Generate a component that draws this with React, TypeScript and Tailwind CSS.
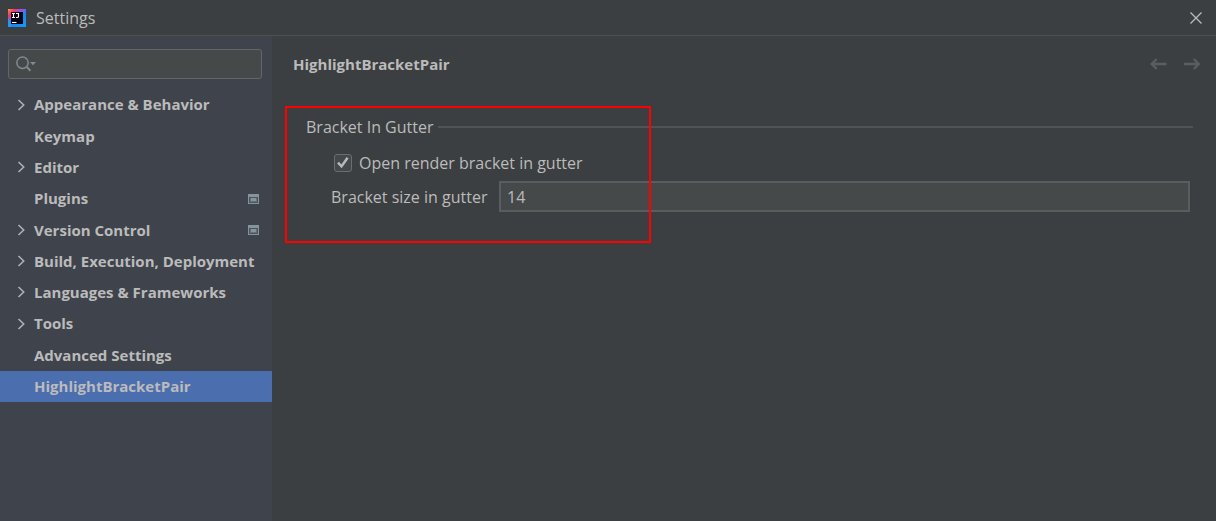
type NavItem = { label: string; expandable?: boolean; project?: boolean; selected?: boolean };

const items: NavItem[] = [
  { label: "Appearance & Behavior", expandable: true },
  { label: "Keymap" },
  { label: "Editor", expandable: true },
  { label: "Plugins", project: true },
  { label: "Version Control", expandable: true, project: true },
  { label: "Build, Execution, Deployment", expandable: true },
  { label: "Languages & Frameworks", expandable: true },
  { label: "Tools", expandable: true },
  { label: "Advanced Settings" },
  { label: "HighlightBracketPair", selected: true },
];

function Logo() {
  return (
    <svg width="18" height="18" viewBox="0 0 18 18" aria-hidden="true">
      <defs>
        <linearGradient id="logo-base" x1="0" y1="0" x2="1" y2="1">
          <stop offset="0" stopColor="#fb9a3d" />
          <stop offset="0.2" stopColor="#f0386b" />
          <stop offset="0.42" stopColor="#8a5be0" />
          <stop offset="0.6" stopColor="#1688f5" />
          <stop offset="1" stopColor="#149bff" />
        </linearGradient>
      </defs>
      <path d="M0 0H18V18H0Z" fill="url(#logo-base)" />
      <path d="M0 9L3 12V18H0Z" fill="#2497f2" />
      <rect x="3" y="3" width="12" height="12" fill="#090410" />
      <path d="M4 4.5H7M5.5 4.5V8.5M4 8.5H7M8 4.5H10.5V7.5Q10.5 8.5 9.2 8.5H8" fill="none" stroke="#fff" strokeWidth="1.1" />
      <path d="M4 13.5H8.5" stroke="#fff" strokeWidth="1.1" />
    </svg>
  );
}

function Chevron() {
  return (
    <svg width="8" height="12" viewBox="0 0 8 12" fill="none" stroke="#afb1b3" strokeWidth="1.6" aria-hidden="true">
      <path d="M1.5 1L6.7 6L1.5 11" />
    </svg>
  );
}

function ProjectIcon() {
  return (
    <svg width="11" height="10" viewBox="0 0 11 10" className="shrink-0" aria-hidden="true">
      <path d="M0 0H11V10H0Z" fill="#87939a" />
      <rect x="1" y="3" width="9" height="6" fill="#4b545c" />
      <rect x="2" y="4" width="7" height="4" fill="#66717a" />
      <rect x="3" y="4" width="5" height="3" fill="#87939a" />
    </svg>
  );
}

function Arrow({ forward }: { forward?: boolean }) {
  return (
    <svg width="18" height="12" viewBox="0 0 18 12" fill="none" stroke="#5b5e60" strokeWidth="2.3" aria-hidden="true">
      <path d={forward ? "M1 6H16M10.8 1L15.8 6L10.8 11" : "M17.5 6H2.5M7.7 1L2.7 6L7.7 11"} />
    </svg>
  );
}

export default function App() {
  return (
    <div className="flex min-h-screen flex-col bg-[#3c3f41] font-['Open_Sans','Noto_Sans',sans-serif] text-base text-[#bbbbbb]">
      <header className="flex h-9 items-center border-b border-[#4d5052] pr-3.5 pl-2">
        <Logo />
        <h1 className="ml-2.5 flex-1">Settings</h1>
        <button type="button" aria-label="Close">
          <svg width="12" height="12" viewBox="0 0 12 12" stroke="#bbbbbb" strokeWidth="1.3" aria-hidden="true">
            <path d="M0.5 0.5L11.5 11.5M11.5 0.5L0.5 11.5" />
          </svg>
        </button>
      </header>
      <div className="flex flex-1">
        <aside className="w-[272px] shrink-0 bg-[#3f434c] pt-[13px]">
          <div className="mr-2.5 ml-2 flex h-[30px] items-center rounded-[3px] border border-[#646668] bg-[#45494a] pl-1.5">
            <svg width="22" height="16" viewBox="0 0 22 16" fill="none" className="shrink-0" aria-hidden="true">
              <circle cx="7.5" cy="6.7" r="5.7" stroke="#7f8b91" strokeWidth="1.5" />
              <path d="M11.5 10.7L15.5 14.8" stroke="#7f8b91" strokeWidth="2" />
              <path d="M15 6H21L18 9.3Z" fill="#7f8b91" />
            </svg>
            <input type="text" aria-label="Search settings" className="min-w-0 flex-1 bg-transparent px-1 outline-none" />
          </div>
          <nav aria-label="Settings categories" className="mt-2.5">
            <ul className="grid h-[313px] auto-rows-fr">
              {items.map((item) => (
                <li key={item.label} className={item.selected ? "flex bg-[#4b6eaf]" : "flex"}>
                  <a href="#" aria-current={item.selected ? "page" : undefined} className="flex flex-1 items-center pr-[13px] pl-[17px] text-[15px] font-bold whitespace-nowrap">
                    <span className="w-[17px] shrink-0">{item.expandable && <Chevron />}</span>
                    <span className="flex-1">{item.label}</span>
                    {item.project && <ProjectIcon />}
                  </a>
                </li>
              ))}
            </ul>
          </nav>
        </aside>
        <main className="min-w-0 flex-1 pr-[23px] pl-[21px]">
          <div className="-mr-2 flex h-14 items-center">
            <h2 className="flex-1 text-[15px] font-bold">HighlightBracketPair</h2>
            <div className="flex gap-4">
              <button type="button" aria-label="Back"><Arrow /></button>
              <button type="button" aria-label="Forward"><Arrow forward /></button>
            </div>
          </div>
          <section className="relative pt-[23px] pl-[13px]">
            <div className="pointer-events-none absolute top-3.5 -left-2 h-[137px] w-[366px] border-2 border-[#ff0000]" />
            <div className="flex h-6 items-center gap-1">
              <h3>Bracket In Gutter</h3>
              <div className="h-0.5 flex-1 bg-[#515456]" />
            </div>
            <label className="mt-3 ml-7 flex h-6 w-fit items-center gap-[7px]">
              <span className="grid size-[18px]">
                <input type="checkbox" defaultChecked className="peer col-start-1 row-start-1 size-[18px] appearance-none rounded-[3px] border border-[#6b6d6e] bg-[#43494a]" />
                <svg viewBox="0 0 18 18" fill="none" stroke="#b8b8b8" strokeWidth="2.5" className="pointer-events-none invisible col-start-1 row-start-1 peer-checked:visible" aria-hidden="true">
                  <path d="M4 8.7L7.5 12.4L13.6 3.8" />
                </svg>
              </span>
              Open render bracket in gutter
            </label>
            <div className="mt-1.5 mr-[3px] ml-[25px] flex items-center">
              <label htmlFor="bracket-size" className="w-[168px] shrink-0 whitespace-nowrap">Bracket size in gutter</label>
              <input id="bracket-size" type="text" defaultValue="14" className="h-[31px] min-w-0 flex-1 border-2 border-[#5a5d5e] bg-[#45494a] px-1.5 outline-none" />
            </div>
          </section>
        </main>
      </div>
    </div>
  );
}
